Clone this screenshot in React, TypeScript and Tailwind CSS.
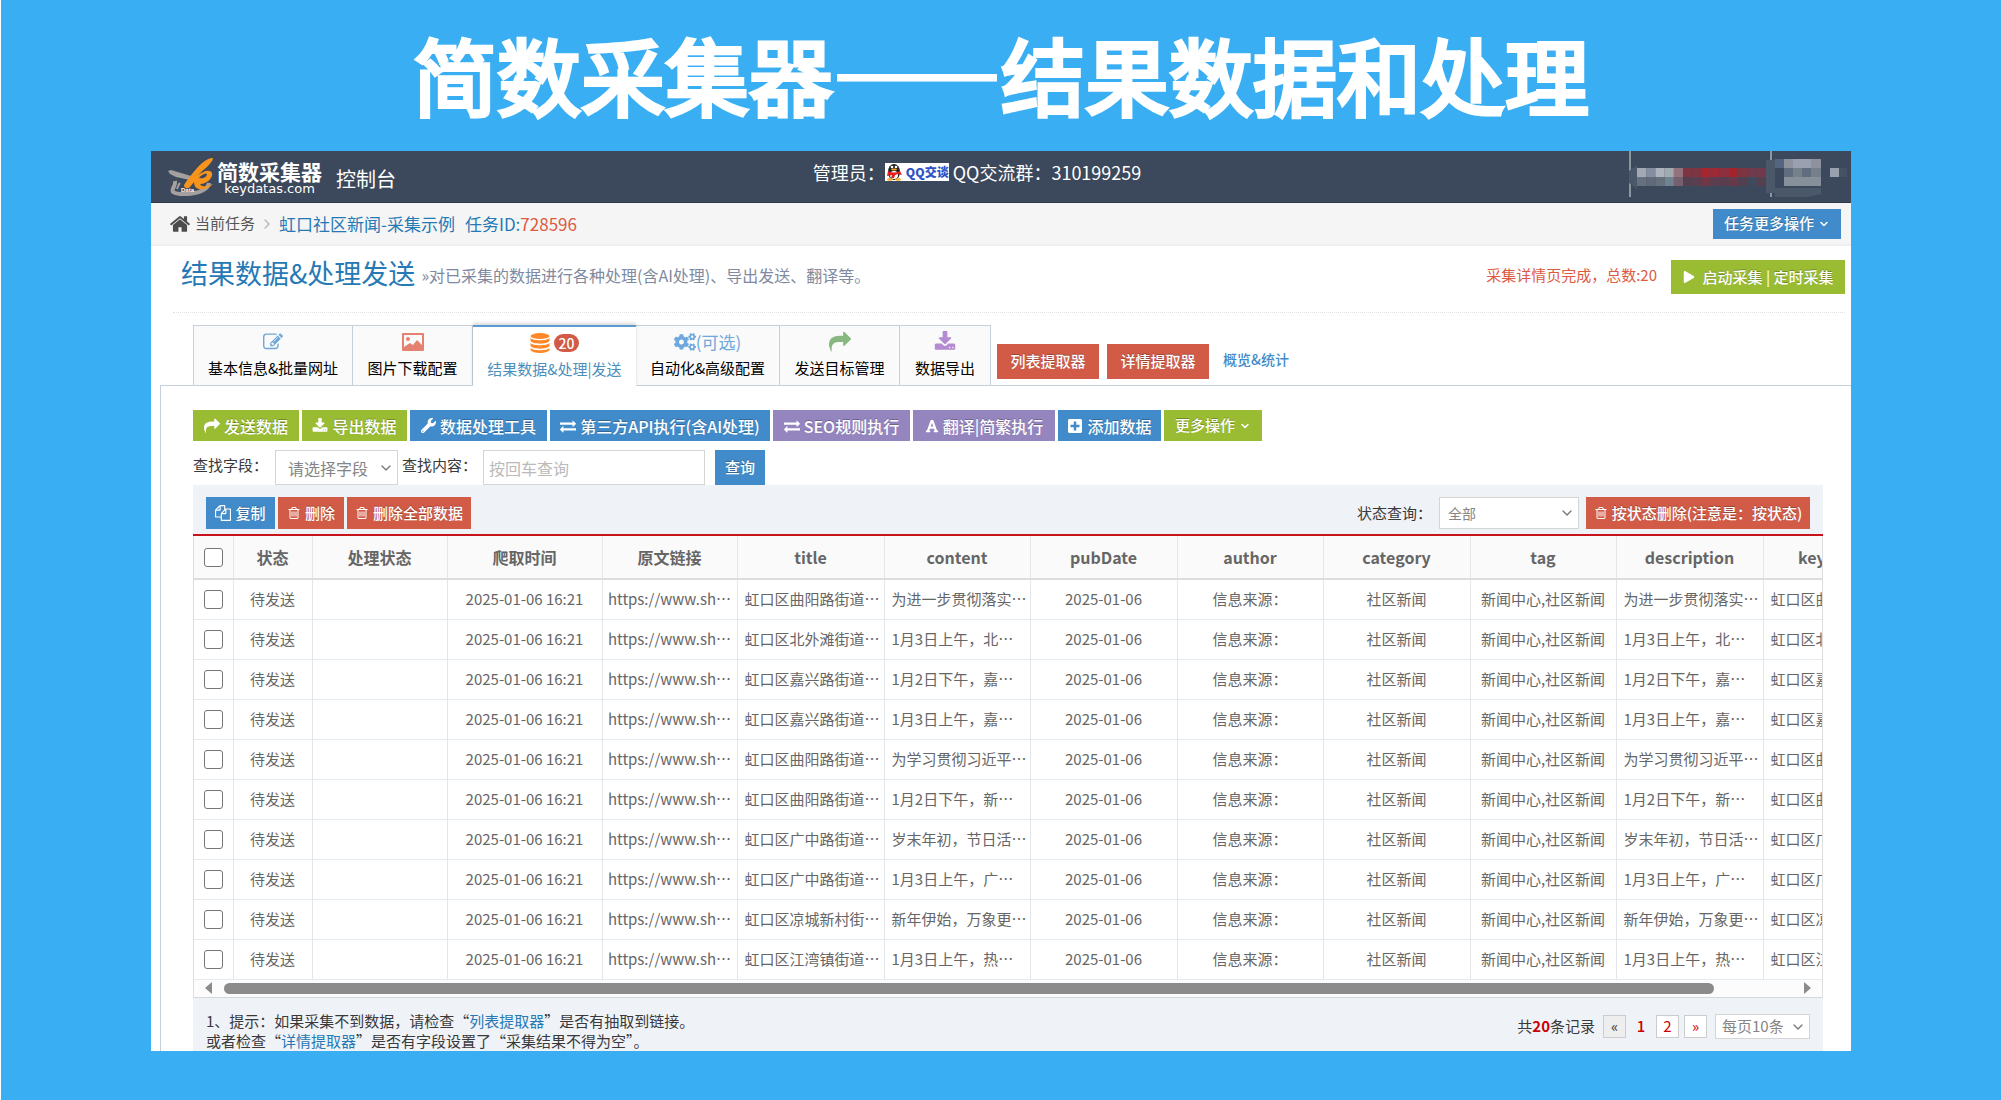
import type { ReactNode } from "react";
import clsx from "clsx";
import { ChevronDown, ChevronRight } from "lucide-react";
import { FaCogs, FaFont, FaPlay, FaPlusSquare, FaWrench } from "react-icons/fa";

const ICONS = {
  share:
    "M1792 640q0 26-19 45l-512 512q-19 19-45 19t-45-19-19-45v-256h-224q-98 0-175.5 6t-154 21.5-133 42.5-105.5 69.5-80 101-48.5 138.5-17.5 181q0 55 5 123 0 6 2.5 23.5t2.5 26.5q0 15-8.5 25t-23.5 10q-16 0-28-17-7-9-13-22t-13.5-30-10.5-24q-127-285-127-451 0-199 53-333 162-403 875-403h224v-256q0-26 19-45t45-19 45 19l512 512q19 19 19 45z",
  exchange:
    "M1792 1184v192q0 13-9.5 22.5t-22.5 9.5h-1376v192q0 13-9.5 22.5t-22.5 9.5q-12 0-24-10l-319-320q-9-9-9-22 0-14 9-23l320-320q9-9 23-9 13 0 22.5 9.5t9.5 22.5v192h1376q13 0 22.5 9.5t9.5 22.5zm0-544q0 14-9 23l-320 320q-9 9-23 9-13 0-22.5-9.5t-9.5-22.5v-192h-1376q-13 0-22.5-9.5t-9.5-22.5v-192q0-13 9.5-22.5t22.5-9.5h1376v-192q0-14 9-23t23-9q12 0 24 10l319 319q9 9 9 23z",
  download:
    "M1344 1344q0-26-19-45t-45-19-45 19-19 45 19 45 45 19 45-19 19-45zm256 0q0-26-19-45t-45-19-45 19-19 45 19 45 45 19 45-19 19-45zm128-224v320q0 40-28 68t-68 28h-1472q-40 0-68-28t-28-68v-320q0-40 28-68t68-28h465l135 136q58 56 136 56t136-56l136-136h464q40 0 68 28t28 68zm-325-569q17 41-14 70l-448 448q-18 19-45 19t-45-19l-448-448q-31-29-14-70 17-39 59-39h256v-448q0-26 19-45t45-19h256q26 0 45 19t19 45v448h256q42 0 59 39z",
  trash:
    "M704 736v576q0 14-9 23t-23 9h-64q-14 0-23-9t-9-23v-576q0-14 9-23t23-9h64q14 0 23 9t9 23zm256 0v576q0 14-9 23t-23 9h-64q-14 0-23-9t-9-23v-576q0-14 9-23t23-9h64q14 0 23 9t9 23zm256 0v576q0 14-9 23t-23 9h-64q-14 0-23-9t-9-23v-576q0-14 9-23t23-9h64q14 0 23 9t9 23zm128 724v-948h-896v948q0 22 7 40.5t14.5 27 10.5 8.5h832q3 0 10.5-8.5t14.5-27 7-40.5zm-672-1076h448l-48-117q-7-9-17-11h-317q-10 2-17 11zm928 32v64q0 14-9 23t-23 9h-96v948q0 83-47 143.5t-113 60.5h-832q-66 0-113-58.5t-47-141.5v-952h-96q-14 0-23-9t-9-23v-64q0-14 9-23t23-9h309l70-167q15-37 54-63t79-26h320q40 0 79 26t54 63l70 167h309q14 0 23 9t9 23z",
  copy:
    "M1696 384q40 0 68 28t28 68v1216q0 40-28 68t-68 28h-960q-40 0-68-28t-28-68v-288h-544q-40 0-68-28t-28-68v-672q0-40 20-88t48-76l408-408q28-28 76-48t88-20h416q40 0 68 28t28 68v328q68-40 128-40h416zm-544 213l-299 299h299v-299zm-640-384l-299 299h299v-299zm196 647l316-316v-416h-384v416q0 40-28 68t-68 28h-416v640h512v-256q0-40 20-88t48-76zm956 804v-1152h-384v416q0 40-28 68t-68 28h-416v640h896z",
  edit:
    "M888 1184l116-116-152-152-116 116v56h96v96h56zm440-720q-16-16-33 1l-350 350q-17 17-1 33t33-1l350-350q17-17 1-33zm80 594v190q0 119-84.5 203.5t-203.5 84.5h-832q-119 0-203.5-84.5t-84.5-203.5v-832q0-119 84.5-203.5t203.5-84.5h832q63 0 117 25 15 7 18 23 3 17-9 29l-49 49q-14 14-32 8-23-6-45-6h-832q-66 0-113 47t-47 113v832q0 66 47 113t113 47h832q66 0 113-47t47-113v-126q0-13 9-22l64-64q15-15 35-7t20 29zm-96-738l288 288-672 672h-288v-288zm444 132l-92 92-288-288 92-92q28-28 68-28t68 28l152 152q28 28 28 68t-28 68z",
  home:
    "M1472 992v480q0 26-19 45t-45 19h-384v-384h-256v384h-384q-26 0-45-19t-19-45v-480q0-1 .5-3t.5-3l575-474 575 474q1 2 1 6zm223-69l-62 74q-8 9-21 11h-3q-13 0-21-7l-692-577-692 577q-12 8-24 7-13-2-21-11l-62-74q-8-10-7-23.5t11-21.5l719-599q32-26 76-26t76 26l244 204v-195q0-14 9-23t23-9h192q14 0 23 9t9 23v408l219 182q10 8 11 21.5t-7 23.5z",
};

function Icon({ name, className }: { name: keyof typeof ICONS; className?: string }) {
  return (
    <svg viewBox="0 0 1792 1792" fill="currentColor" aria-hidden="true" className={clsx("shrink-0", className ?? "size-4")}>
      <path d={ICONS[name]} />
    </svg>
  );
}

function PictureIcon() {
  return (
    <svg viewBox="0 0 22 18" aria-hidden="true" className="h-[18px] w-[22px] text-[#e58171]">
      <rect width="22" height="18" rx="1" fill="currentColor" />
      <path d="M2 2h18v10l-5-5-4 5-3-2-6 4z" fill="#fafafa" />
      <circle cx="6" cy="6" r="2" fill="currentColor" />
    </svg>
  );
}

function DatabaseIcon() {
  return (
    <svg viewBox="0 0 20 20" fill="#ff892a" aria-hidden="true" className="size-5">
      <ellipse cx="10" cy="3" rx="9.500" ry="3" />
      <path d="M.5 5c2 3 17 3 19 0v3c-2 3.500-17 3.500-19 0zM.5 10c2 3 17 3 19 0v3c-2 3.500-17 3.500-19 0zM.5 15c2 3 17 3 19 0v2c-2 4-17 4-19 0z" />
    </svg>
  );
}

function LogoMark() {
  return (
    <svg viewBox="0 0 48 40" aria-hidden="true" className="h-10 w-12 shrink-0">
      <path d="M1 14l3-1 20 6-1 4-14-3-6-3z" fill="#a5a0a0" />
      <path d="M8 24c1 5-4 8-2 11 5 4 34 3 36-9" fill="none" stroke="#a5a0a0" strokeWidth="4" />
      <path d="M13 26c-2 2-2 4-3 6" fill="none" stroke="#a5a0a0" strokeWidth="2" />
      <path d="M46 1c-7 0-14 7-21 16-4 5-8 10-8 12 1 3 4 3 6 1l4-5c0 6 4 8 10 7 4-1 7-3 9-5-5 2-11 4-13 0 8 0 13-7 12-11-2-4-9-2-15 3C36 13 46 6 46 1z" fill="#f7941d" />
      <path d="M32 21c2-3 6-5 8-4 0 3-4 5-8 4z" fill="#3c485b" />
      <text x="14" y="35" fontSize="6" fontWeight="700" fill="#fff" fontFamily="Liberation Sans, sans-serif">Data</text>
    </svg>
  );
}

function QQBadge() {
  return (
    <a href="#qq" className="mr-1 flex h-[18px] w-16 items-center justify-between bg-white text-xs leading-4 font-black whitespace-nowrap text-[#2f52c4]">
      <svg viewBox="0 0 18 18" aria-hidden="true" className="size-[18px] shrink-0">
        <ellipse cx="9" cy="9" rx="6" ry="8" fill="#222" />
        <ellipse cx="9" cy="12" rx="4" ry="4" fill="#fff" />
        <path d="M3 8q6 3 12 0l2 4-4-1-3 1-1 3H6l1-3-5 1z" fill="#e11d1d" />
        <circle cx="7" cy="4" r="1.300" fill="#fff" />
        <circle cx="11" cy="4" r="1.300" fill="#fff" />
        <ellipse cx="9" cy="6.500" rx="3" ry="1" fill="#f5a623" />
        <ellipse cx="5" cy="16.500" rx="3" ry="1.200" fill="#f5a623" />
        <ellipse cx="13" cy="16.500" rx="3" ry="1.200" fill="#f5a623" />
      </svg>
      QQ交谈
    </a>
  );
}

const MOSAIC = [
  ["#a3a8b6", "#848ea0", "#adb2bc", "#a1a9b1", "#94727d", "#7f3442", "#7f3442", "#a6262f", "#9b2a36", "#8d2f3c", "#a2242c", "#7f3442", "#703a4b", "#703a4b"],
  ["#66707f", "#5f6b7b", "#66707f", "#718391", "#74606f", "#54404f", "#5b3f50", "#713747", "#5b3f50", "#5a3d4d", "#673a4b", "#523f50", "#3f4a5d", "#563f50"],
];

function AccountMosaic() {
  return (
    <svg viewBox="0 0 222 51" aria-hidden="true" className="h-[51px] w-[222px]">
      <path d="M1 0v46M142 0v46" stroke="#dfe3e8" />
      <path d="M0 20l8-6v24l-8-6zM137 9h9v33h-9zM146 42v-5h46v6l-14 3h-32z" fill="#4b586a" />
      {MOSAIC.map((row, y) =>
        row.map((fill, x) => (
          <rect key={`${y}-${x}`} x={8 + x * 9.2} y={17 + y * 9} width="9.300" height="9" fill={fill} />
        )),
      )}
      <path d="M146 8h9v9h-9z" fill="#56657e" />
      <path d="M155 8h9v9h-9zM182 8h10v9h-10z" fill="#8e929c" />
      <path d="M164 8h18v9h-18z" fill="#9aa0b0" />
      <path d="M155 17h9v9h-9zM173 17h9v9h-9z" fill="#5f6d7e" />
      <path d="M164 17h9v9h-9zM182 17h10v9h-10z" fill="#76808a" />
      <path d="M155 26h37v9h-37z" fill="#86909a" />
      <path d="M201 17h9v9h-9z" fill="#98a1ad" />
      <path d="M210 17h8v9h-8z" fill="#465164" />
    </svg>
  );
}

const TONES = {
  green: "bg-[#9abc32]",
  blue: "bg-[#428bca]",
  red: "bg-[#d15b47]",
  purple: "bg-[#9585bf]",
};

interface ButtonProps {
  tone: keyof typeof TONES;
  className?: string;
  children: ReactNode;
}

function Button({ tone, className, children }: ButtonProps) {
  return (
    <button
      type="button"
      className={clsx(
        "flex shrink-0 items-center justify-center gap-1 whitespace-nowrap font-medium text-white [text-shadow:0_-1px_0_rgba(0,0,0,0.25)]",
        TONES[tone],
        className,
      )}
    >
      {children}
    </button>
  );
}

interface SelectProps {
  id: string;
  label?: string;
  value: string;
  className: string;
  pad?: string;
}

function Select({ id, label, value, className, pad = "pl-2" }: SelectProps) {
  return (
    <span className={clsx("relative flex shrink-0", className)}>
      <select id={id} aria-label={label} className={clsx("w-full appearance-none border border-[#d5d5d5] bg-white text-[#858585]", pad)}>
        <option>{value}</option>
      </select>
      <ChevronDown className="pointer-events-none absolute top-1/2 right-1 size-4 -translate-y-1/2 text-[#777]" />
    </span>
  );
}

const TABS = [
  { label: "基本信息&批量网址", width: "w-40", icon: <Icon name="edit" className="size-5 text-[#6fa8dc]" /> },
  { label: "图片下载配置", width: "w-30", icon: <PictureIcon /> },
  {
    label: "结果数据&处理|发送",
    width: "w-[163px]",
    active: true,
    icon: (
      <>
        <DatabaseIcon />
        <span className="ml-1 rounded-full bg-[#d15b47] px-[5px] text-sm leading-[18px] font-medium text-white">20</span>
      </>
    ),
  },
  {
    label: "自动化&高级配置",
    width: "w-36",
    icon: (
      <span className="flex items-center text-[17px] text-[#6fa8dc]">
        <FaCogs className="size-[22px]" />
        (可选)
      </span>
    ),
  },
  { label: "发送目标管理", width: "w-30", icon: <Icon name="share" className="size-[22px] text-[#87b87f]" /> },
  { label: "数据导出", width: "w-[91px]", icon: <Icon name="download" className="size-[22px] text-[#b48bd2]" /> },
];

const COLUMNS = [
  { name: "状态", width: "w-[79px]" },
  { name: "处理状态", width: "w-[135px]" },
  { name: "爬取时间", width: "w-[155px]" },
  { name: "原文链接", width: "w-[135px]" },
  { name: "title", width: "w-[147px]" },
  { name: "content", width: "w-[146px]" },
  { name: "pubDate", width: "w-[147px]" },
  { name: "author", width: "w-[146px]" },
  { name: "category", width: "w-[147px]" },
  { name: "tag", width: "w-[146px]" },
  { name: "description", width: "w-[147px]" },
  { name: "keywords", width: "w-[146px]" },
];

const ROWS = [
  ["虹口区曲阳路街道", "为进一步贯彻落实"],
  ["虹口区北外滩街道", "1月3日上午，北"],
  ["虹口区嘉兴路街道", "1月2日下午，嘉"],
  ["虹口区嘉兴路街道", "1月3日上午，嘉"],
  ["虹口区曲阳路街道", "为学习贯彻习近平"],
  ["虹口区曲阳路街道", "1月2日下午，新"],
  ["虹口区广中路街道", "岁末年初，节日活"],
  ["虹口区广中路街道", "1月3日上午，广"],
  ["虹口区凉城新村街", "新年伊始，万象更"],
  ["虹口区江湾镇街道", "1月3日上午，热"],
];

function Check({ label }: { label: string }) {
  return (
    <input
      type="checkbox"
      aria-label={label}
      className="mx-auto block size-[19px] appearance-none rounded-[3px] border border-[#767676] bg-white"
    />
  );
}

function ResultTable() {
  return (
    <div className="overflow-hidden border-x border-[#ddd] bg-white">
      <table className="w-[1715px] table-fixed border-collapse text-[15px] text-[#666]">
        <colgroup>
          <col className="w-[39px]" />
          {COLUMNS.map((c) => (
            <col key={c.name} className={c.width} />
          ))}
        </colgroup>
        <thead>
          <tr className="h-[43px] border-b-2 border-[#ddd] bg-[#fafafa] text-base">
            <th>
              <Check label="全选" />
            </th>
            {COLUMNS.map((c) => (
              <th key={c.name} className="border-l border-[#e3e6ea] font-bold">
                {c.name}
              </th>
            ))}
          </tr>
        </thead>
        <tbody>
          {ROWS.map(([title, content], i) => {
            const cells = [
              "待发送",
              "",
              "2025-01-06 16:21",
              "https://www.sh⋯",
              `${title}⋯`,
              `${content}⋯`,
              "2025-01-06",
              "信息来源：",
              "社区新闻",
              "新闻中心,社区新闻",
              `${content}⋯`,
              `${title}⋯`,
            ];
            return (
              <tr key={i} className="h-10 border-b border-[#e3eaf0]">
                <td>
                  <Check label={`选择第${i + 1}行`} />
                </td>
                {cells.map((text, j) => (
                  <td
                    key={j}
                    className={clsx(
                      "overflow-hidden border-l border-[#e3e6ea] whitespace-nowrap",
                      [4, 5, 10, 11].includes(j) ? "pl-[7px] text-left" : "text-center",
                    )}
                  >
                    {text}
                  </td>
                ))}
              </tr>
            );
          })}
        </tbody>
      </table>

      <div aria-hidden="true" className="flex h-[18px] items-center gap-3 border-b border-[#d5d5d5] bg-[#fcfcfc] px-[11px]">
        <span className="border-y-6 border-r-7 border-y-transparent border-r-[#8b8b8b]" />
        <span className="flex-1">
          <span className="block h-[11px] w-[95%] rounded-full bg-[#8b8b8b]" />
        </span>
        <span className="border-y-6 border-l-7 border-y-transparent border-l-[#8b8b8b]" />
      </div>
    </div>
  );
}

export default function App() {
  return (
    <div
      lang="zh-CN"
      className="min-h-screen border-l border-white bg-[#3aaef2] px-[150px] pb-12 font-['Noto_Sans_CJK_SC',sans-serif] text-[15px] text-[#393939]"
    >
      <h1 className="flex h-[151px] items-center justify-center pb-1 text-[84px] leading-none font-normal whitespace-nowrap text-white [-webkit-text-stroke:4px_white]">
        简数采集器——结果数据和处理
      </h1>

      <div className="h-[900px] overflow-hidden bg-white">
        <header className="flex h-[52px] justify-between border-b border-[#2f3949] bg-[#3c485b] text-white">
          <div className="flex flex-1 items-center pl-4">
            <LogoMark />
            <div className="ml-[2px] flex flex-col items-center">
              <span className="text-[21px] leading-6 font-bold">简数采集器</span>
              <span className="font-['DejaVu_Sans',sans-serif] text-[13px] leading-3">keydatas.com</span>
            </div>
            <span className="ml-[14px] pt-1 text-xl">控制台</span>
          </div>
          <div className="flex h-[42px] items-center pr-16 text-lg leading-6">
            管理员：
            <QQBadge />
            QQ交流群：310199259
          </div>
          <div className="flex flex-1 justify-end">
            <AccountMosaic />
          </div>
        </header>

        <nav className="flex h-[43px] items-center border-b-2 border-[#eee] bg-[#f5f5f5] pr-[10px] pl-[18px] text-[17px]">
          <Icon name="home" className="size-[22px] text-[#4c4c4c]" />
          <span className="ml-1 text-[15px] text-[#555]">当前任务</span>
          <ChevronRight className="mx-1 size-4 text-[#b2b6bf]" />
          <a href="#task" className="text-[#2679b5]">虹口社区新闻-采集示例</a>
          <a href="#task-id" className="ml-[10px] text-[#2679b5]">
            任务ID:<span className="text-[#dd5a43]">728596</span>
          </a>
          <Button tone="blue" className="ml-auto h-[30px] w-32 text-[15px]">
            任务更多操作
            <ChevronDown className="size-3" strokeWidth={3} />
          </Button>
        </nav>

        <div className="mr-[6px] ml-[22px] flex h-[67px] items-center border-b border-dotted border-[#e2e2e2] pb-1">
          <h2 className="ml-2 pb-2 text-[27px] leading-9 text-[#2679b5]">结果数据&amp;处理发送</h2>
          <p className="ml-[6px] pb-1 text-base text-[#8089a0]">»对已采集的数据进行各种处理(含AI处理)、导出发送、翻译等。</p>
          <p className="mr-[14px] ml-auto pb-1 text-[15px] text-[#dd5a43]">采集详情页完成，总数:20</p>
          <Button tone="green" className="h-[34px] w-[174px] text-[15px]">
            <FaPlay className="mr-1 size-3" />
            启动采集 | 定时采集
          </Button>
        </div>

        <div className="mt-3 flex h-[61px] pl-[42px]">
          {TABS.map((t, i) => (
            <button
              key={t.label}
              type="button"
              className={clsx(
                "relative flex h-[61px] shrink-0 flex-col items-center pt-1 text-[15px] whitespace-nowrap",
                t.width,
                t.active
                  ? "z-10 border-t-2 border-[#5b9bd1] bg-white text-[#4c8fbd] shadow-[0_-2px_3px_rgba(0,0,0,0.15)]"
                  : "border-t border-r border-b border-[#c5d0dc] bg-[#fafafa] text-black",
                i === 0 && "border-l",
              )}
            >
              <span className="flex h-6 items-center">{t.icon}</span>
              <span className="leading-7">{t.label}</span>
            </button>
          ))}
          <Button tone="red" className="mt-[19px] ml-[6px] h-[35px] w-[102px] text-[15px]">列表提取器</Button>
          <Button tone="red" className="mt-[19px] ml-2 h-[35px] w-[102px] text-[15px]">详情提取器</Button>
          <a href="#stats" className="mt-6 ml-[14px] text-sm font-medium text-[#428bca]">概览&amp;统计</a>
        </div>

        <main className="-mt-px ml-[9px] border-t border-l border-[#c5d0dc] pt-6 pr-7 pl-8">
          <div className="flex h-[31px] gap-[3px] text-base">
            <Button tone="green" className="w-[106px]"><Icon name="share" />发送数据</Button>
            <Button tone="green" className="w-[105px]"><Icon name="download" />导出数据</Button>
            <Button tone="blue" className="w-[137px]"><FaWrench className="size-[15px]" />数据处理工具</Button>
            <Button tone="blue" className="w-[220px]"><Icon name="exchange" />第三方API执行(含AI处理)</Button>
            <Button tone="purple" className="w-[137px]"><Icon name="exchange" />SEO规则执行</Button>
            <Button tone="purple" className="w-[142px]"><FaFont className="size-[14px]" />翻译|简繁执行</Button>
            <Button tone="blue" className="w-[103px]"><FaPlusSquare className="size-4" />添加数据</Button>
            <Button tone="green" className="w-[98px] text-[15px]">
              更多操作
              <ChevronDown className="size-3" strokeWidth={3} />
            </Button>
          </div>

          <div className="mt-[9px] flex h-[35px] text-[15px]">
            <label htmlFor="field" className="w-[82px] pt-1">查找字段：</label>
            <Select id="field" value="请选择字段" pad="pl-3" className="mr-1 w-[123px] text-base" />
            <label htmlFor="keyword" className="w-[81px] pt-1">查找内容：</label>
            <input id="keyword" placeholder="按回车查询" className="w-[222px] border border-[#d5d5d5] px-[5px] text-base placeholder:text-[#bababa]" />
            <Button tone="blue" className="ml-[10px] w-[50px]">查询</Button>
          </div>

          <div className="flex h-[49px] items-end gap-[3px] bg-[#eff3f8] px-[13px] pb-[5px] text-[15px]">
            <Button tone="blue" className="h-8 w-[69px]"><Icon name="copy" />复制</Button>
            <Button tone="red" className="h-8 w-[66px]"><Icon name="trash" className="size-[14px]" />删除</Button>
            <Button tone="red" className="h-8 w-[124px]"><Icon name="trash" className="size-[14px]" />删除全部数据</Button>
            <label htmlFor="status" className="mr-1 ml-auto leading-8">状态查询：</label>
            <Select id="status" value="全部" className="mr-1 h-8 w-[140px] text-sm" />
            <Button tone="red" className="h-8 w-[224px]"><Icon name="trash" className="size-[14px]" />按状态删除(注意是：按状态)</Button>
          </div>

          <div className="h-[2px] bg-[#c8131b]" />
          <ResultTable />

          <div className="flex justify-between bg-[#eff3f8] px-[13px] pt-[13px] pb-8">
            <p className="text-[15px] leading-5">
              1、提示：如果采集不到数据，请检查“<a href="#list" className="text-[#2679b5]">列表提取器</a>”是否有抽取到链接。
              <br />
              或者检查“<a href="#detail" className="text-[#2679b5]">详情提取器</a>”是否有字段设置了“采集结果不得为空”。
            </p>
            <div className="flex h-7 items-center pt-1 text-[15px]">
              共<b className="text-[#c00]">20</b>条记录
              <a href="#prev" className="ml-2 flex h-[23px] w-[23px] items-center justify-center border border-[#ccc] bg-[#eee]">«</a>
              <span className="w-[30px] text-center font-medium text-[#c00]">1</span>
              <a href="#p2" className="flex h-[23px] w-[23px] items-center justify-center border border-[#ccc] bg-white text-[#c00]">2</a>
              <a href="#next" className="ml-[5px] flex h-[23px] w-[23px] items-center justify-center border border-[#ccc] bg-white text-[#c00]">»</a>
              <Select id="page-size" label="每页条数" value="每页10条" pad="pl-[6px]" className="ml-2 h-[25px] w-[95px]" />
            </div>
          </div>
        </main>
      </div>
    </div>
  );
}
